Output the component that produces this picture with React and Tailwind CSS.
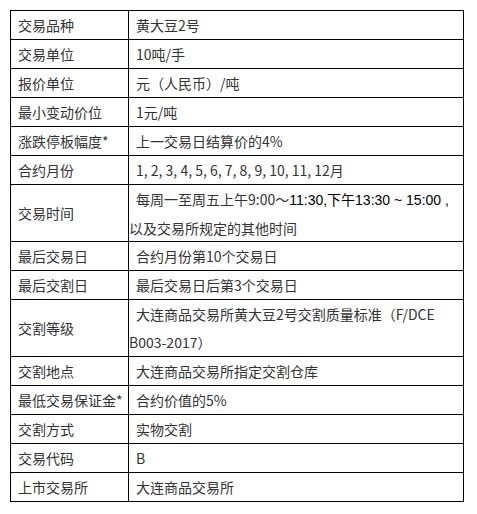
const rows = [
  { label: '交易品种', value: '黄大豆2号' },
  { label: '交易单位', value: '10吨/手' },
  { label: '报价单位', value: '元（人民币）/吨' },
  { label: '最小变动价位', value: '1元/吨' },
  { label: '涨跌停板幅度*', value: '上一交易日结算价的4%' },
  { label: '合约月份', value: '1, 2, 3, 4, 5, 6, 7, 8, 9, 10, 11, 12月' },
  {
    label: '交易时间',
    tall: true,
    value: (
      <>
        每周一至周五上午9:00～
        <span className="text-black font-['Liberation_Sans','Noto_Sans_CJK_SC',sans-serif]">
          11:30,下午13:30 ~ 15:00 ,
        </span>
        <br />
        以及交易所规定的其他时间
      </>
    ),
  },
  { label: '最后交易日', value: '合约月份第10个交易日' },
  { label: '最后交割日', value: '最后交易日后第3个交易日' },
  {
    label: '交割等级',
    tall: true,
    value: (
      <>
        大连商品交易所黄大豆2号交割质量标准（F/DCE
        <br />
        B003-2017）
      </>
    ),
  },
  { label: '交割地点', value: '大连商品交易所指定交割仓库' },
  { label: '最低交易保证金*', value: '合约价值的5%' },
  { label: '交割方式', value: '实物交割' },
  { label: '交易代码', value: 'B' },
  { label: '上市交易所', value: '大连商品交易所' },
];

export default function App() {
  return (
    <div className="min-h-[514px] bg-white p-[10px] font-['Noto_Sans_CJK_SC',sans-serif] text-[14px] leading-[28px] text-[#333]">
      <div className="w-[454px] border border-black">
        {rows.map((row, i) => (
          <div
            key={row.label}
            className={`flex overflow-hidden ${row.tall ? 'h-[56px]' : 'h-[28px]'} box-content ${i > 0 ? 'border-t border-black' : ''}`}
          >
            <div className="flex w-[118px] shrink-0 items-center border-r border-black pl-[7px] whitespace-nowrap">
              {row.label}
            </div>
            <div className="flex-1 whitespace-nowrap indent-[7px] overflow-hidden">
              {row.value}
            </div>
          </div>
        ))}
      </div>
    </div>
  );
}
